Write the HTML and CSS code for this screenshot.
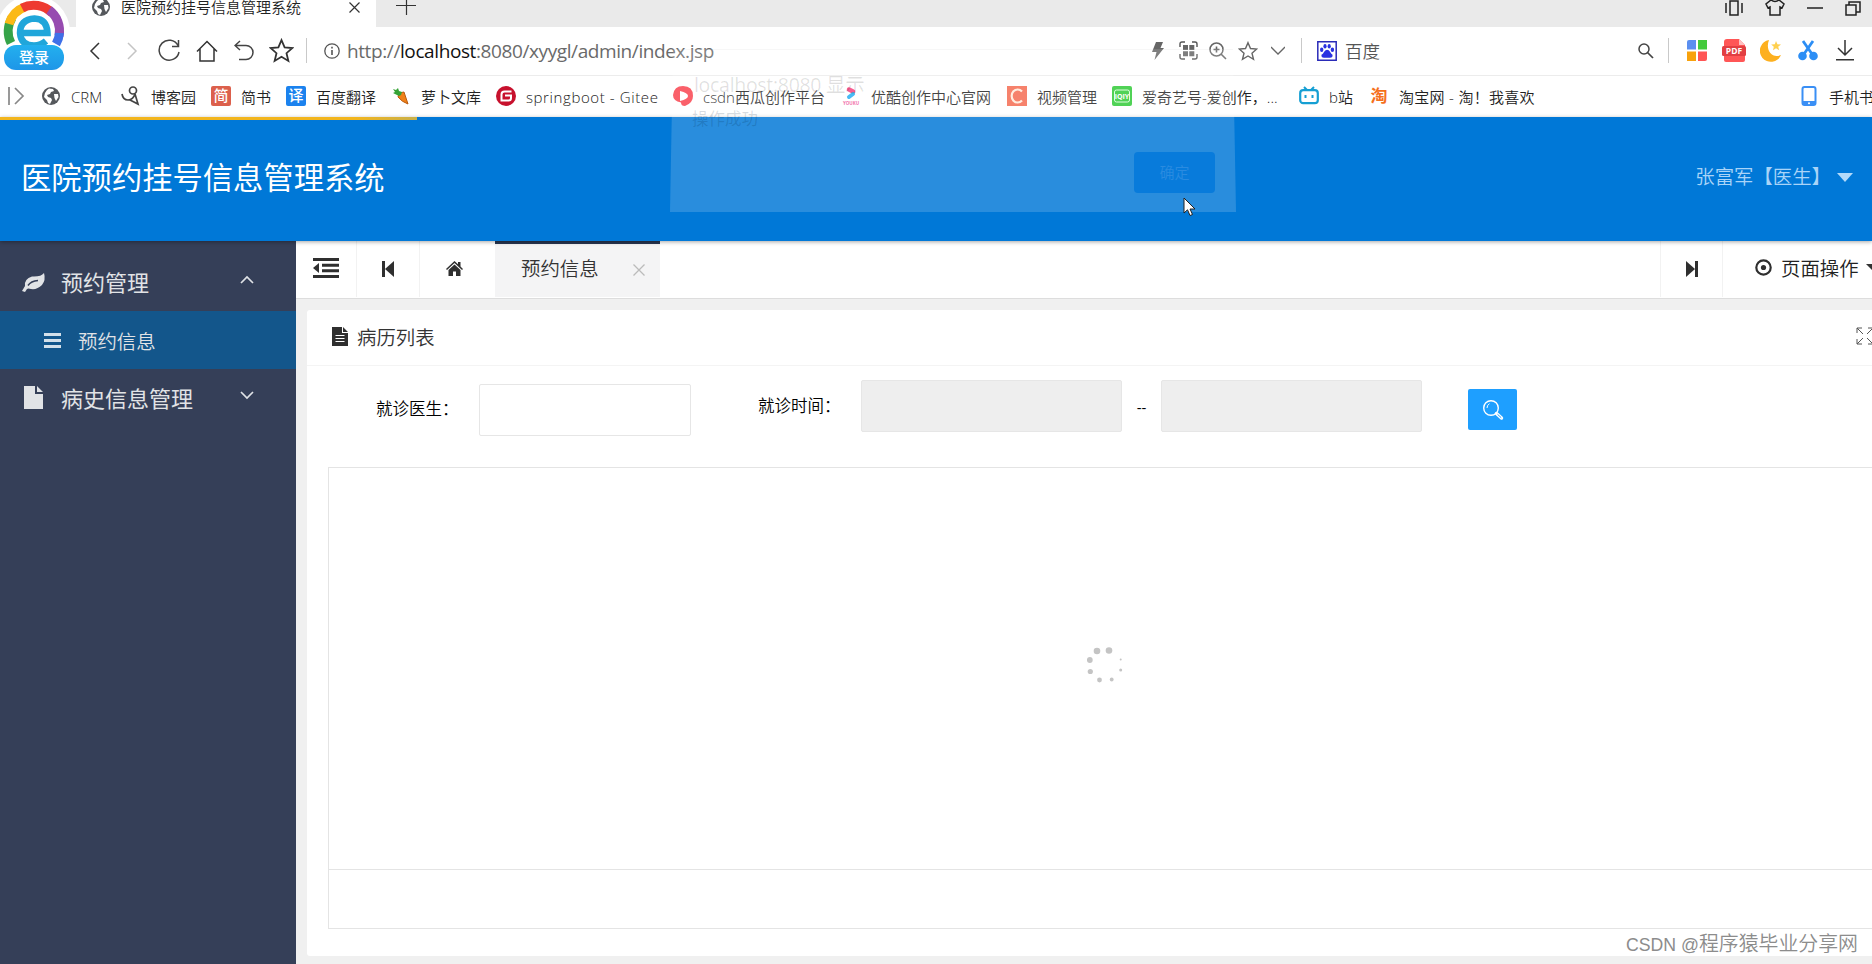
FILE: index.html
```html
<!DOCTYPE HTML>
<html lang="zh-CN">
<head>
<meta charset="utf-8" />
<title>医院预约挂号信息管理系统</title>
<link rel="stylesheet" href="styles.css">
</head>
<body>
<svg class="defs" width="0" height="0">
	<symbol id="globe" viewBox="0 0 18 18">
		<circle cx="9" cy="9" r="9" fill="#55585c"/>
		<path d="M7 1.500L11 2l1 2-3 1-1 2-3 1 1 2 3 1 1 2-2 4-2-1-1-3-3-3 1-4 2-3zM12 7l4 0 .5 3-2.500 4-1.500-3z" fill="#fff"/>
	</symbol>
	<symbol id="star" viewBox="0 0 24 24">
		<path d="M12 2l3 7 7.500.6-5.700 5 1.800 7.400-6.600-4-6.600 4 1.800-7.400-5.700-5L9 9z" fill="none" stroke="currentColor" stroke-width="1.700"/>
	</symbol>
	<symbol id="skip" viewBox="0 0 12 16">
		<path d="M0 0h3v16H0zM12 0v16L3 8z" fill="#2f2f2f"/>
	</symbol>
</svg>

<div class="tabs">
	<div class="tab">
		<svg width="18" height="18"><use href="#globe"/></svg>
		<span>医院预约挂号信息管理系统</span>
		<svg width="11" height="11" viewBox="0 0 11 11"><path d="M.5.5l10 10M10.500.5l-10 10" stroke="#333" stroke-width="1.200"/></svg>
	</div>
	<svg class="add" width="20" height="20" viewBox="0 0 20 20"><path d="M0 10.500h20M10.500 0v20" stroke="#333" stroke-width="1.200"/></svg>
	<div class="win">
		<svg width="18" height="16" viewBox="0 0 18 16"><path d="M1 3v10M17 3v10M5 1h8v14H5z" fill="none" stroke="#222" stroke-width="1.500"/></svg>
		<svg width="20" height="17" viewBox="0 0 20 17"><path d="M6 1q4 3 8 0l5 4-2 4-2-1v8H5V8L3 9 1 5z" fill="none" stroke="#222" stroke-width="1.500"/></svg>
		<svg width="16" height="16" viewBox="0 0 16 16"><path d="M0 8h16" stroke="#222" stroke-width="1.500"/></svg>
		<svg width="16" height="16" viewBox="0 0 16 16"><path d="M1 5h10v10H1zM4 5V2h11v10h-4" fill="none" stroke="#222" stroke-width="1.500"/></svg>
	</div>
</div>

<div class="address">
	<div class="nav">
		<i><svg width="12" height="18" viewBox="0 0 12 18"><path d="M10 1L2 9l8 8" fill="none" stroke="#333" stroke-width="1.500"/></svg></i>
		<i><svg width="12" height="18" viewBox="0 0 12 18"><path d="M2 1l8 8-8 8" fill="none" stroke="#c4c4c4" stroke-width="1.500"/></svg></i>
		<i><svg width="24" height="24" viewBox="0 0 24 24"><path d="M21 6.500A10 10 0 1 0 22 13M21.500 1v6.500H15" fill="none" stroke="#444" stroke-width="1.500"/></svg></i>
		<i><svg width="22" height="22" viewBox="0 0 22 22"><path d="M1 11.500L11 1.500l10 10M4 9v12h14V9" fill="none" stroke="#333" stroke-width="1.500"/></svg></i>
		<i><svg width="20" height="21" viewBox="0 0 20 21"><path d="M6 1L1 5.500 6 10M1 5.500h11a7 7 0 0 1 0 14H5" fill="none" stroke="#444" stroke-width="1.500"/></svg></i>
		<i><svg class="dark" width="25" height="25"><use href="#star"/></svg></i>
	</div>
	<b class="sep"></b>
	<svg class="info" width="16" height="16" viewBox="0 0 16 16"><circle cx="8" cy="8" r="7.200" fill="none" stroke="#555" stroke-width="1.300"/><path d="M8 7v5M8 3.800v1.800" stroke="#555" stroke-width="1.600"/></svg>
	<div class="url">http://<em>localhost</em>:8080/xyygl/admin/index.jsp</div>
	<div class="tools">
		<i><svg width="12" height="18" viewBox="0 0 12 18"><path d="M4 0h7L8.500 6H12L2.500 18 4.500 10H0z" fill="#666"/></svg></i>
		<i><svg width="19" height="19" viewBox="0 0 19 19"><path d="M1 6V3q0-2 2-2h3M13 1h3q2 0 2 2v3M18 13v3q0 2-2 2h-3M6 18H3q-2 0-2-2v-3" fill="none" stroke="#555" stroke-width="1.400"/><path d="M4 4h5v5H4zM10.300 4h5v5h-5zM4 10.300h5v5H4zM10.300 10.300h5v5h-5z" fill="#666"/></svg></i>
		<i><svg width="18" height="18" viewBox="0 0 18 18"><path d="M12 12l5 5M4.500 7.500h6M7.500 4.500v6" stroke="#666" stroke-width="1.600"/><circle cx="7.500" cy="7.500" r="6.500" fill="none" stroke="#666" stroke-width="1.500"/></svg></i>
		<i><svg width="20" height="20"><use href="#star"/></svg></i>
		<i><svg width="14" height="9" viewBox="0 0 14 9"><path d="M0 1l7 7 7-7" fill="none" stroke="#666" stroke-width="1.300"/></svg></i>
	</div>
	<b class="sep"></b>
	<svg class="paw" width="20" height="20" viewBox="0 0 20 20"><path d="M.8.8h18.400v18.400H.8z" fill="#fff" stroke="#2a2bb8" stroke-width="1.500"/><g fill="#2932e1"><ellipse cx="4.700" cy="8.800" rx="1.700" ry="2.200"/><ellipse cx="8" cy="5.200" rx="1.600" ry="2.200"/><ellipse cx="12.200" cy="5.200" rx="1.600" ry="2.200"/><ellipse cx="15.400" cy="8.800" rx="1.700" ry="2.200"/><path d="M10 8.800q2 0 3 2t2.500 3q.5 3-2.500 3h-6q-3 0-2.500-3Q6 13 7 11t3-2.200z"/></g></svg>
	<span class="engine">百度</span>
	<svg class="find" width="16" height="16" viewBox="0 0 16 16"><circle cx="6" cy="6" r="5" fill="none" stroke="#444" stroke-width="1.500"/><path d="M9.500 9.500L15 15" stroke="#444" stroke-width="1.700"/></svg>
	<b class="sep"></b>
	<div class="ext">
		<i><svg width="20" height="21" viewBox="0 0 20 21"><path d="M2 0h7v9.500H0V2q0-2 2-2z" fill="#5b8ff0"/><path d="M11 0h9v9.500h-9z" fill="#43ca3c"/><path d="M0 11.500h9V21H0z" fill="#f8a20c"/><path d="M11 11.500h9V19q0 2-2 2h-7z" fill="#ff5555"/></svg></i>
		<i><svg width="24" height="23" viewBox="0 0 24 23"><path d="M5 0h12l6 6v15q0 2-2 2H4q-2 0-2-2V3q0-3 3-3z" fill="#ff5656"/><path d="M17 0v6h6z" fill="#ffc0c0"/><rect y="7" width="24" height="10" rx="1.500" fill="#e23f42"/><text x="12" y="15.200" class="pdf">PDF</text></svg></i>
		<i><svg width="22" height="23" viewBox="0 0 22 23"><path d="M9 1A11 11 0 1 0 21 16C12 20 5 11 9 1z" fill="#fdb01f"/><path d="M16 2l1.400 3.300 3.600.2-2.800 2.300 1 3.500-3.200-2-3 2 .8-3.500-2.600-2.300 3.600-.2z" fill="#ffd04f"/></svg></i>
		<i><svg width="20" height="21" viewBox="0 0 20 21"><path d="M5 1l9 13M15 1L6 14" stroke="#2c8ef5" stroke-width="2.800"/><circle cx="4.500" cy="16" r="4.300" fill="#2c8ef5"/><circle cx="15.500" cy="16" r="4.300" fill="#2c8ef5"/></svg></i>
		<i><svg width="20" height="21" viewBox="0 0 20 21"><path d="M10 0v15M3 8l7 7 7-7M1 19.800h18" fill="none" stroke="#333" stroke-width="1.500"/></svg></i>
	</div>
</div>

<div class="marks">
	<a><svg width="17" height="18" viewBox="0 0 17 18"><path d="M1 0v18M7 1l8 8-8 8" fill="none" stroke="#888" stroke-width="1.700"/></svg></a>
	<a><svg width="20" height="18"><use href="#globe"/></svg><span>CRM</span></a>
	<a><svg width="20" height="20" viewBox="0 0 20 20"><g fill="none" stroke="#444" stroke-width="1.700"><circle cx="12" cy="4.500" r="3.500"/><path d="M1 8q1 6 6 6t7-6M14 8l3 10-8-4"/></g></svg><span>博客园</span></a>
	<a><i class="ico red">简</i><span>简书</span></a>
	<a><i class="ico blue">译</i><span>百度翻译</span></a>
	<a><svg width="20" height="18" viewBox="0 0 20 18"><path d="M8 6l5-1 4 12q-6-2-10-7z" fill="#f08119" stroke="#b95a10"/><path d="M8 9L2 6l2-1-2-3 3 1 2-2 1 3 3 1-1 3z" fill="#36a336"/></svg><span>萝卜文库</span></a>
	<a><svg width="20" height="20" viewBox="0 0 20 20"><circle cx="10" cy="10" r="10" fill="#c7112d"/><path d="M15.500 5.500H8.500Q5.500 5.500 5.500 8.500v6h7q2.500 0 2.500-2.500V9.500H9" fill="none" stroke="#fff" stroke-width="2"/></svg><span class="gitee">springboot - Gitee</span></a>
	<a><svg width="20" height="20" viewBox="0 0 20 20"><path d="M10 0q10 0 10 10 0 7-8 10-4 0-4-3.500Q0 15 0 9 1 0 10 0z" fill="#f9424e"/><path d="M7 5q8 2 8 5t-8 5z" fill="#fff"/></svg><span>csdn西瓜创作平台</span></a>
	<a><svg width="20" height="20" viewBox="0 0 20 20"><path d="M8 3.500l4 2" stroke="#f83e7d" stroke-width="4.500" stroke-linecap="round"/><path d="M8 11l4-3" stroke="#27aef4" stroke-width="4" stroke-linecap="round"/><text x="10" y="19" class="youku">YOUKU</text></svg><span>优酷创作中心官网</span></a>
	<a><svg width="20" height="20" viewBox="0 0 20 20"><path d="M0 0h20v20H0z" fill="#f56a50"/><path d="M15 5.500A6 6.500 0 1 0 15 14.500" fill="none" stroke="#ffeada" stroke-width="2.200"/></svg><span>视频管理</span></a>
	<a><svg width="20" height="20" viewBox="0 0 20 20"><rect width="20" height="20" rx="2" fill="#2fca36"/><rect x="2.500" y="4" width="15" height="12" rx="2" fill="none" stroke="#d8ffd8"/><text x="10" y="13" class="iqiyi">iQIY</text></svg><span>爱奇艺号-爱创作，...</span></a>
	<a><svg width="20" height="20" viewBox="0 0 20 20"><path d="M5 1l3 3M15 1l-3 3" stroke="#159fd3" stroke-width="2"/><rect x="1.200" y="4.200" width="17.600" height="13" rx="3" fill="#fff" stroke="#159fd3" stroke-width="2.200"/><path d="M6.500 9v3M13.500 9v3" stroke="#159fd3" stroke-width="2"/></svg><span>b站</span></a>
	<a><i class="ico tao">淘</i><span class="taobao">淘宝网 - 淘！我喜欢</span></a>
	<a><svg width="20" height="20" viewBox="0 0 20 20"><rect x="3.500" y="1" width="13" height="18" rx="2" fill="#fff" stroke="#3a8ff5" stroke-width="2"/><path d="M3.500 15h13v4h-13z" fill="#3a8ff5"/><circle cx="10" cy="17.300" r="1" fill="#fff"/></svg><span>手机书签</span></a>
</div>

<div class="login">
	<svg width="72" height="72" viewBox="0 0 72 72">
		<circle cx="33" cy="32" r="37" fill="#fff"/>
		<g fill="none" stroke-width="9">
			<path d="M11 43A25.500 25.500 0 0 1 12 18" stroke="#36a348"/>
			<path d="M9 24A25.500 25.500 0 0 1 25 7" stroke="#fbb916"/>
			<path d="M22 8A25.500 25.500 0 0 1 52 13" stroke="#ee3b30"/>
			<path d="M49 10A25.500 25.500 0 0 1 59 36" stroke="#974bb0"/>
			<path d="M59.500 33A25.500 25.500 0 0 1 56 44" stroke="#3f70e8"/>
		</g>
		<path d="M20 33h27.500Q47 19 34.500 18.500 20 19.500 20 33q1 12.500 14 12.500 7 0 12-4.500" fill="none" stroke="#20a6da" stroke-width="6.500"/>
	</svg>
	<span>登录</span>
</div>

<div class="header">
	<h1>医院预约挂号信息管理系统</h1>
	<div class="user">张富军【医生】</div>
</div>

<div class="wrap">
	<div class="side">
		<div class="menu">
			<svg width="24" height="19" viewBox="0 0 24 19"><path d="M22 0q2 7-2 12-5 5-11 4-3-1-4 0l-2 3-3-1 3-5Q2 6 10 3.500 19 4 22 0z" fill="#e1e3e6"/><path d="M6 12.500q3-4.500 10-5" fill="none" stroke="#353f58" stroke-width="1.500"/></svg>
			<span>预约管理</span>
			<svg width="14" height="9" viewBox="0 0 14 9"><path d="M1 8l6-6 6 6" fill="none" stroke="#dfe2e6" stroke-width="1.700"/></svg>
		</div>
		<div class="sub">
			<svg width="17" height="15" viewBox="0 0 17 15"><path d="M0 1.500h17M0 7.500h17M0 13.500h17" stroke="#d3e0ea" stroke-width="3"/></svg>
			<span>预约信息</span>
		</div>
		<div class="menu last">
			<svg width="24" height="23" viewBox="0 0 24 23"><path d="M2 0h11v8h8v15H2zM15 0l6 6h-6z" fill="#e1e3e6"/></svg>
			<span>病史信息管理</span>
			<svg width="14" height="9" viewBox="0 0 14 9"><path d="M1 1l6 6 6-6" fill="none" stroke="#dfe2e6" stroke-width="1.700"/></svg>
		</div>
	</div>
	<div class="main">
		<div class="bar">
			<div class="cell c1"><svg width="26" height="20" viewBox="0 0 26 20"><path d="M0 1.500h26M9 7.200h17M9 12.800h17M0 18.500h26" stroke="#2f2f2f" stroke-width="3"/><path d="M6 5v10l-6-5z" fill="#2f2f2f"/></svg></div>
			<div class="cell c2"><svg width="12" height="16"><use href="#skip"/></svg></div>
			<div class="cell c3"><svg width="17" height="15" viewBox="0 0 17 15"><path d="M0 8L8.500 0 12 3.300V1h2.500v4.500L17 8l-1 1-7.500-7L1 9zM2.500 9l6-5.500 6 5.500v6H10v-4.500H7V15H2.500z" fill="#2f2f2f"/></svg></div>
			<div class="page">
				<span>预约信息</span>
				<svg width="12" height="12" viewBox="0 0 12 12"><path d="M.5.5l11 11M11.500.5l-11 11" stroke="#bbb" stroke-width="1.300"/></svg>
			</div>
			<div class="cell next"><svg class="flip" width="12" height="16"><use href="#skip"/></svg></div>
			<div class="opt">
				<svg width="17" height="17" viewBox="0 0 17 17"><circle cx="8.500" cy="8.500" r="7.200" fill="none" stroke="#2f2f2f" stroke-width="2.200"/><circle cx="8.500" cy="8.500" r="2.600" fill="#2f2f2f"/></svg>
				<span>页面操作</span>
				<b></b>
			</div>
		</div>
		<div class="card">
			<div class="title">
				<svg width="16" height="19" viewBox="0 0 16 19"><path d="M0 0h10v6h6v13H0zM11 0l5 5h-5z" fill="#2f2f2f"/><path d="M3.500 8.500h9M3.500 11.500h9M3.500 14.500h9" stroke="#fff" stroke-width="1.200"/></svg>
				<span>病历列表</span>
				<svg class="full" width="18" height="18" viewBox="0 0 18 18"><path d="M1 6V1h5M1 1l6 6M12 1h5v5M17 1l-6 6M1 12v5h5M1 17l6-6M17 12v5h-5M17 17l-6-6" fill="none" stroke="#555"/></svg>
			</div>
			<div class="form">
				<label>就诊医生：</label>
				<input class="doctor" type="text">
				<label class="time">就诊时间：</label>
				<input class="date" type="text" readonly>
				<em>--</em>
				<input class="date" type="text" readonly>
				<button><svg width="22" height="22" viewBox="0 0 22 22"><circle cx="9" cy="9" r="7.300" fill="none" stroke="#fff" stroke-width="1.400"/><path d="M5 9q0-3 2.500-4.300" fill="none" stroke="#fff"/><path d="M14.500 14.500l5 4.500" stroke="#fff" stroke-width="3.400" stroke-linecap="round"/><path d="M15.500 15.300l3.700 3.400" stroke="#1e9fff" stroke-width="1"/></svg></button>
			</div>
			<div class="table">
				<div class="rows">
					<svg width="36" height="36" viewBox="0 0 36 36" fill="#c4c4c4"><circle cx="10" cy="4" r="3.300"/><circle cx="22" cy="3.500" r="3.300"/><circle cx="2.800" cy="13" r="2.900"/><circle cx="3.300" cy="24.500" r="2.600"/><circle cx="12.500" cy="33" r="2.400"/><circle cx="24.700" cy="32.500" r="1.900"/><circle cx="33.700" cy="23" r="1.500"/><circle cx="33.700" cy="12.500" r="1"/></svg>
				</div>
				<div class="pager"></div>
			</div>
		</div>
	</div>
</div>

<div class="progress"></div>
<div class="alert">
	<p class="from">localhost:8080 显示</p>
	<p class="msg">操作成功</p>
	<a>确定</a>
</div>
<svg class="cursor" width="13" height="20" viewBox="0 0 13 20"><path d="M1 1v15l3.500-3.200L7 18.500l2.500-1L7 12h5z" fill="#fff" stroke="#222"/></svg>
<div class="mark"><span>CSDN @</span>程序猿毕业分享网</div>
</body>
</html>
```
FILE: styles.css
```css
*{ margin:0; padding:0; box-sizing:border-box;}
body{ width:1872px; height:964px; overflow:hidden; position:relative; background:#f0f0f0; color:#333; font-family:"Open Sans","Noto Sans CJK SC",sans-serif; font-weight:350; white-space:nowrap;}
i,em{ font-style:normal;}
svg{ display:block; flex:none;}
.defs{ position:absolute;}

/* 浏览器标签栏 */
.tabs{ height:27px; background:#eaeaea; display:flex; padding-left:76px; overflow:hidden;}
.tab{ width:300px; height:27px; background:#fff; display:flex; align-items:center; padding:0 16px 13px 16px; font:350 15px/16px "Noto Sans CJK SC",sans-serif;}
.tab span{ flex:1; margin-left:11px; color:#222;}
.add{ margin:-5px 0 0 20px;}
.win{ margin-left:auto; height:15px; display:flex; align-items:center; width:147px;}
.win svg{ margin-right:22px;}

/* 地址栏 */
.address{ height:49px; background:#fff; border-bottom:1px solid #ececec; display:flex; align-items:center; padding-bottom:1px; color:#555;}
.address i{ display:flex; justify-content:center; align-items:center;}
.nav{ display:flex; margin-left:76px; width:230px;}
.nav i{ width:37.300px;}
.dark{ color:#333;}
.sep{ width:1px; height:25px; background:#c9c9c9;}
.info{ margin-left:17px;}
.url{ margin-left:7px; width:796px; font:400 19px/26px "Open Sans",sans-serif; letter-spacing:-.4px; color:#6a6a6a;}
.url em{ color:#111;}
.tools{ display:flex; width:158px; color:#666;}
.tools i{ width:30px;}
.paw{ margin-left:15px;}
.engine{ margin-left:8px; font-size:17.500px; width:293px;}
.find{ margin-right:14px;}
.ext{ display:flex; margin-left:9px;}
.ext i{ width:37.200px;}
.pdf{ font:700 8.500px "Open Sans",sans-serif; fill:#fff; text-anchor:middle;}

/* 收藏栏 */
.marks{ height:41px; background:#fff; display:grid; grid-template-columns:41px 80px 90px 75px 105px 105px 177px 168px 166px 105px 187px 70px 430px 100px; align-items:center; padding-bottom:1px; font-size:15px; color:#222;}
.marks a{ display:flex; align-items:center; height:40px;}
.marks a:first-child{ padding-left:8px;}
.marks span{ margin:2px 0 0 10px; line-height:20px;}
.marks .gitee{ letter-spacing:.6px;}
.marks .taobao{ letter-spacing:.3px;}
.ico{ width:20px; height:20px; border-radius:2px; color:#fff; font-size:15px; line-height:19px; font-weight:500; text-align:center;}
.red{ background:#dc604c;}
.blue{ background:#1b82ee;}
.tao{ color:#f5701c; font-size:17px; font-weight:700;}
.youku{ font:700 4.500px "Open Sans",sans-serif; fill:#f0599c; text-anchor:middle;}
.iqiyi{ font:700 7px "Open Sans",sans-serif; fill:#fff; text-anchor:middle;}

.login{ position:absolute; left:0; top:0; width:72px; height:72px;}
.login span{ position:absolute; left:4px; top:45px; width:60px; height:25px; border-radius:12px; background:linear-gradient(#23b0ee,#1e96e8); color:#fff; font-size:15px; line-height:24px; font-weight:500; text-align:center;}

.header{ height:124px; background:#0078d7; display:flex; justify-content:space-between; align-items:center; padding:0 19px 2px 21px; position:relative; box-shadow:0 1px 4px rgba(0,0,0,.35); z-index:2;}
.header h1{ color:#fff; font-size:30.300px; line-height:40px; font-weight:400;}
.user{ color:#a9d4f8; font-size:19.400px; line-height:26px; padding-bottom:2px; display:flex; align-items:center;}
.user:after{ content:""; margin-left:6px; border:8px solid transparent; border-top:9px solid #b2dafa; border-bottom:0;}

.wrap{ display:flex; height:723px;}
.side{ width:296px; flex:none; background:#353f58; color:#e1e3e6;}
.menu{ height:70px; padding:12px 42px 0 22px; display:flex; align-items:center; font-size:22px; line-height:30px; font-weight:400;}
.menu span{ flex:1; margin-left:15px;}
.menu svg:last-child{ margin-top:-5px;}
.menu.last{ height:58px; padding-top:0; padding-bottom:1px;}
.sub{ height:58px; background:#13568b; display:flex; align-items:center; padding-left:44px; font-size:19.400px;}
.sub span{ margin-left:17px;}

.main{ width:1576px; overflow:hidden;}
.bar{ height:58px; background:#fff; border-bottom:1px solid #ddd; display:flex;}
.cell{ display:flex; align-items:center; justify-content:center; height:56px; border-right:1px solid #f2f2f2;}
.c1{ width:61px; padding-bottom:2px;}
.c2{ width:63px;}
.c3{ width:75px; border:0; padding:0 7px 2px 0;}
.page{ width:165px; height:56px; background:#f4f4f5; border-top:3px solid #283651; display:flex; align-items:center; justify-content:space-between; padding:0 15px 6px 26px; font-size:19.400px;}
.page svg{ margin-top:5px;}
.next{ margin-left:auto; width:63px; border-left:1px solid #f2f2f2;}
.flip{ transform:scaleX(-1);}
.opt{ width:149px; display:flex; align-items:center; padding:0 0 4px 32px; font-size:19.400px; color:#222;}
.opt span{ margin-left:9px;}
.opt b{ flex:none; margin-left:7px; border:8px solid transparent; border-top:8px solid #333; border-bottom:0;}

.card{ width:1600px; height:646px; margin:11px 0 0 11px; background:#fff; border-radius:3px; font-size:19.400px;}
.title{ height:56px; border-bottom:1px solid #f4f4f4; display:flex; align-items:center; padding:0 0 2px 25px;}
.title span{ margin-left:9px;}
.full{ margin:-1px 0 0 1421px;}
.form{ height:101px; display:flex; align-items:flex-start; padding:14px 0 0 69px; color:#000; font-size:16.500px;}
.form label{ width:103px; line-height:24px; margin-top:17px;}
.form .time{ margin:14px 0 0 67px; width:103px;}
.form input{ height:52px; border:1px solid #e6e6e6; border-radius:2px; background:#fff;}
.form .doctor{ width:212px; margin-top:4px;}
.form .date{ width:261px; background:#eee;}
.form em{ width:39px; text-align:center; margin-top:17px; font-size:15px; font-weight:400;}
.form button{ width:49px; height:41px; margin:9px 0 0 46px; border:0; border-radius:2px; background:#1e9fff; display:flex; align-items:center; justify-content:center;}
.table{ margin-left:21px; width:1554px; height:462px; border:1px solid #e4e4e4;}
.rows{ height:402px; border-bottom:1px solid #e4e4e4; display:flex; align-items:center; justify-content:center; padding-bottom:7px;}

/* 加载进度与弹窗淡出 */
.progress{ position:absolute; left:0; top:117px; width:417px; height:3px; background:linear-gradient(90deg,#f2b51d 85%,#c9b04a); z-index:3;}
.alert{ position:absolute; left:670px; top:49px; width:566px; height:163px; background:rgba(255,255,255,.16); clip-path:polygon(3px 0,563px 0,566px 100%,0 100%); z-index:3; border-top:1px solid rgba(0,0,0,.03);}
.from{ position:absolute; left:24px; top:22px; font-size:19.500px; line-height:26px; letter-spacing:-.3px; font-weight:400; color:rgba(0,0,0,.12);}
.msg{ position:absolute; left:22px; top:57px; font-size:16.500px; line-height:24px; font-weight:400; color:rgba(0,30,60,.16);}
.alert a{ position:absolute; left:464px; top:102px; width:81px; height:41px; border-radius:4px; background:#087bdb; color:#2a8be0; font-size:15px; line-height:41px; text-align:center;}
.cursor{ position:absolute; left:1183px; top:197px; z-index:4;}
.mark{ position:absolute; right:14px; top:930px; font:350 19.900px/28px "Liberation Sans","Noto Sans CJK SC",sans-serif; color:#8c8c8c; text-shadow:1px 1px 0 #fff;}
.mark span{ font-size:17.700px;}
```
